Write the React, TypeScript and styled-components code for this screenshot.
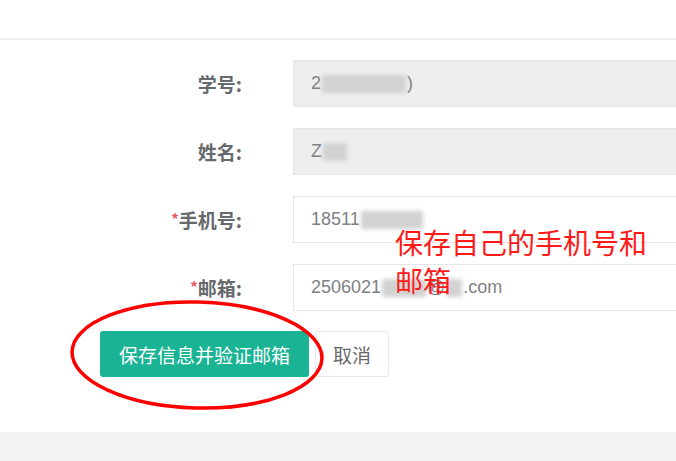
import React from "react";
import styled, { createGlobalStyle } from "styled-components";

const Global = createGlobalStyle`
  html, body { margin: 0; padding: 0; background: #fff; overflow: hidden; }
  body { font-family: "Liberation Sans", "Noto Sans CJK SC", sans-serif; }
`;

const Page = styled.div`
  position: relative;
  width: 676px;
  height: 461px;
  overflow: hidden;
  display: flex;
  flex-direction: column;
`;

const Header = styled.div`
  height: 38px;
  border-bottom: 2px solid #eef0f1;
  flex: none;
`;

const Form = styled.div`
  display: flex;
  flex-direction: column;
  gap: 21px;
  padding-top: 20px;
  margin-right: -20px;
`;

const Row = styled.div`
  display: grid;
  grid-template-columns: 242px 1fr;
  column-gap: 51px;
  align-items: center;
`;

const Label = styled.label`
  text-align: right;
  font-family: "Noto Sans CJK SC", sans-serif;
  font-size: 19px;
  font-weight: 700;
  color: #676a6c;
`;

const Star = styled.span`
  color: #ed5565;
  font-size: 15px;
  vertical-align: 3px;
`;

const Field = styled.div<{ $readonly?: boolean }>`
  height: 47px;
  box-sizing: border-box;
  border: 1px solid #e5e6e7;
  background: ${(p) => (p.$readonly ? "#eeeeee" : "#ffffff")};
  padding: 0 17px;
  display: flex;
  align-items: center;
  font-family: "Liberation Sans", sans-serif;
  font-size: 18px;
  color: #7e8184;
`;

const Blur = styled.span<{ $w: number }>`
  display: inline-block;
  width: ${(p) => p.$w}px;
  height: 18px;
  background: #d2d2d2;
  filter: blur(2px);
  margin: 0 1px;
`;

const Actions = styled.div`
  display: flex;
  gap: 6px;
  padding-left: 100px;
  margin-top: 20px;
`;

const Primary = styled.button`
  width: 209px;
  height: 46px;
  border: none;
  border-radius: 3px;
  background: #1ab394;
  color: #fff;
  font-family: "Noto Sans CJK SC", sans-serif;
  font-size: 19px;
  padding: 0;
`;

const Secondary = styled.button`
  width: 74px;
  height: 46px;
  border: 1px solid #e7eaec;
  border-radius: 3px;
  background: #fff;
  color: #676a6c;
  font-family: "Noto Sans CJK SC", sans-serif;
  font-size: 19px;
  padding: 0;
`;

const Spacer = styled.div`
  flex: 1;
`;

const Footer = styled.div`
  height: 29px;
  background: #f3f3f4;
  flex: none;
`;

const Note = styled.div`
  position: absolute;
  left: 395px;
  top: 223px;
  width: 270px;
  font-family: "Noto Sans CJK SC", sans-serif;
  font-size: 28px;
  line-height: 38px;
  color: #ff1a1a;
`;

const Ring = styled.svg`
  position: absolute;
  left: 0;
  top: 0;
  pointer-events: none;
`;

export default function App() {
  return (
    <Page>
      <Global />
      <Header />
      <Form>
        <Row>
          <Label>学号:</Label>
          <Field $readonly>
            2<Blur $w={84} />)
          </Field>
        </Row>
        <Row>
          <Label>姓名:</Label>
          <Field $readonly>
            Z<Blur $w={24} />
          </Field>
        </Row>
        <Row>
          <Label>
            <Star>*</Star>手机号:
          </Label>
          <Field>
            18511<Blur $w={62} />
          </Field>
        </Row>
        <Row>
          <Label>
            <Star>*</Star>邮箱:
          </Label>
          <Field>
            2506021<Blur $w={44} />@<Blur $w={16} />.com
          </Field>
        </Row>
      </Form>
      <Actions>
        <Primary>保存信息并验证邮箱</Primary>
        <Secondary>取消</Secondary>
      </Actions>
      <Spacer />
      <Footer />
      <Note>保存自己的手机号和邮箱</Note>
      <Ring width="676" height="461" viewBox="0 0 676 461">
        <ellipse
          cx="197"
          cy="355"
          rx="125"
          ry="53"
          transform="rotate(1.5 197 355)"
          fill="none"
          stroke="#ff0000"
          strokeWidth="3.5"
        />
      </Ring>
    </Page>
  );
}
